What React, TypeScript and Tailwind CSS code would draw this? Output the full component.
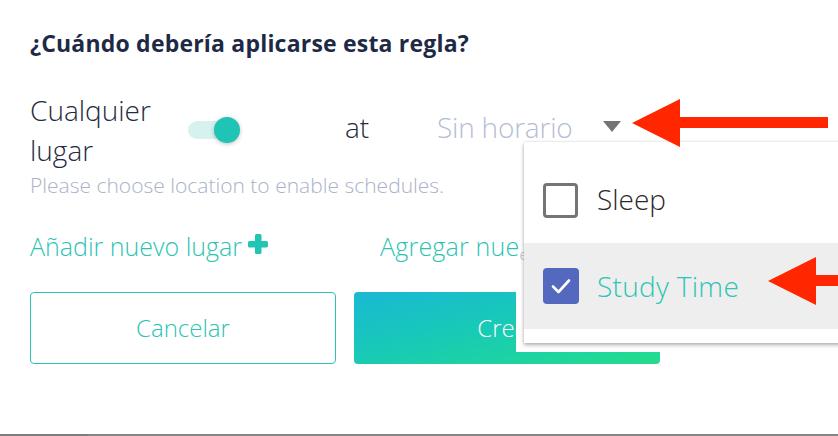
import React from "react";

const font = { fontFamily: "'Open Sans', 'Noto Sans', sans-serif" };

export default function App() {
  return (
    <div
      className="relative w-[838px] h-[436px] bg-white overflow-hidden flex flex-col"
      style={font}
    >
      <div className="pl-[30px] pt-[29px] flex flex-col flex-1">
        <h2 className="text-[23px] font-bold text-[#1e2a45] leading-[28px] h-[28px] tracking-[0.2px] whitespace-nowrap">
          ¿Cuándo debería aplicarse esta regla?
        </h2>
        <div className="flex items-center mt-[33px] h-[80px]">
          <div className="w-[157px] text-[28px] leading-[40px] text-[#262b3f] font-light">
            Cualquier
            <br />
            lugar
          </div>
          <div className="relative w-[56px] h-[30px] flex items-center">
            <div className="w-[47px] h-[18px] rounded-full bg-[#d6f2ef] ml-[1px]" />
            <div className="absolute left-[27px] top-[2px] w-[26px] h-[26px] rounded-full bg-[#20c4b4] shadow-[0_1px_4px_rgba(0,0,0,0.25)]" />
          </div>
          <div className="ml-[102px] text-[28px] text-[#262b3f] font-light leading-[40px] w-[92px] mt-[-6px]">
            at
          </div>
          <div className="flex items-center mt-[-6px]">
            <div className="h-[40px]">
              <div className="h-[32px] overflow-hidden">
                <span className="block text-[28px] text-[#b6bdd6] font-light leading-[40px] tracking-[-0.2px] whitespace-nowrap">
                  Sin horario
                </span>
              </div>
            </div>
            <svg width="18" height="11" viewBox="0 0 18 11" className="ml-[30px] mt-[-2px]">
              <polygon points="0,0 18,0 9,11" fill="#757575" />
            </svg>
          </div>
        </div>
        <p className="mt-[4px] text-[21px] leading-[22px] text-[#aab2c8] font-light whitespace-nowrap">
          Please choose location to enable schedules.
        </p>
        <div className="flex items-center mt-[35px] h-[30px] whitespace-nowrap">
          <span className="text-[25px] text-[#2bc4b4] font-light leading-[30px]">Añadir nuevo lugar</span>
          <svg width="20" height="20" viewBox="0 0 20 20" className="ml-[6px] mt-[-4px]">
            <rect x="7" y="0" width="6.5" height="20" rx="1.5" fill="#22c4b4" />
            <rect x="0" y="7" width="20" height="6.5" rx="1.5" fill="#22c4b4" />
          </svg>
          <span className="ml-[112px] text-[25px] text-[#2bc4b4] font-light leading-[30px] tracking-[0.2px]">Agregar nue</span>
          <span className="text-[15px] text-[#aab2c8] font-light mt-[16px] leading-[20px]">e</span>
        </div>
        <div className="flex mt-[31px] gap-[18px]">
          <button className="w-[306px] h-[72px] border border-[#2bc4b4] rounded-[4px] text-[24px] text-[#2bc4b4] font-light bg-white">
            Cancelar
          </button>
          <button className="w-[306px] h-[72px] rounded-[4px] text-[24px] text-white font-light bg-gradient-to-br from-[#1bb8d4] to-[#24dd8a]">
            Crear
          </button>
        </div>
      </div>
      <div className="h-[2px] bg-[#858585] flex">
        <div className="w-[88px] bg-[#7d7d7d]" />
      </div>

      {/* white backdrop behind the menu */}
      <div className="absolute left-[516px] top-[266px] w-[330px] h-[86px] bg-white" />

      {/* dropdown menu */}
      <div className="absolute left-[524px] top-[142px] w-[330px] h-[201px] bg-white shadow-[0_2px_4px_rgba(0,0,0,0.3),0_0_2px_rgba(0,0,0,0.12)] pt-[15px]">
        <div className="flex items-center h-[86px] pl-[19px]">
          <div className="w-[35px] h-[35px] border-[3px] border-[#757575] rounded-[4px]" />
          <span className="ml-[19px] text-[28px] text-[#2a2a2a] font-light mt-[-3px]">Sleep</span>
        </div>
        <div className="flex items-center h-[86px] pl-[19px] bg-[#eeeeee]">
          <div className="w-[36px] h-[36px] rounded-[4px] bg-[#5468c0] flex items-center justify-center">
            <svg width="24" height="24" viewBox="0 0 24 24">
              <path d="M4 12.5 L9.5 18 L20 6.5" stroke="white" strokeWidth="2.6" fill="none" strokeLinecap="round" strokeLinejoin="round" />
            </svg>
          </div>
          <span className="ml-[18px] text-[28px] text-[#2ec4b6] font-light tracking-[0.3px]">Study Time</span>
        </div>
      </div>

      {/* red arrows */}
      <svg className="absolute left-[630px] top-[98px]" width="208" height="50" viewBox="0 0 208 50">
        <polygon points="2,25 50,1 50,49" fill="#ff2600" />
        <rect x="48" y="19" width="150" height="11" fill="#ff2600" />
      </svg>
      <svg className="absolute left-[766px] top-[255px]" width="72" height="52" viewBox="0 0 72 52">
        <polygon points="2,26 50,2 50,50" fill="#ff2600" />
        <rect x="48" y="20" width="30" height="11" fill="#ff2600" />
      </svg>
    </div>
  );
}
